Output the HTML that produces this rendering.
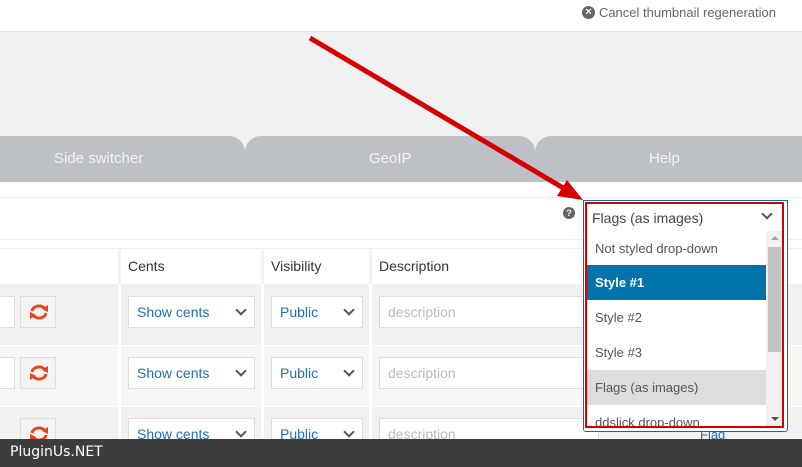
<!DOCTYPE html>
<html><head><style>
body{margin:0;width:802px;height:467px;overflow:hidden;position:relative;font-family:"Liberation Sans",sans-serif;background:#fff}
.a{position:absolute}
.sel{position:absolute;background:#fff;border:1px solid #ddd;color:#2271b1;font-size:14px;box-sizing:border-box;padding-left:8px;line-height:30px}
.chev{position:absolute;right:9px;top:9px;width:6px;height:6px;border-right:2px solid #555;border-bottom:2px solid #555;transform:rotate(45deg)}
.ref{position:absolute;width:36px;height:32px;border:1px solid #ddd;background:#f3f3f3;box-sizing:border-box}
.ref svg{position:absolute;left:8px;top:6px}
.desc{position:absolute;background:#fff;border:1px solid #ddd;color:#bbb;font-size:14px;padding-left:8px;line-height:30px;box-sizing:border-box;width:220px;height:32px}
.opt{position:absolute;left:0;width:179px;height:35px;line-height:35px;padding-left:8px;font-size:13px;color:#555;box-sizing:border-box}
</style></head><body>
<div class="a" style="left:0;top:0;width:802px;height:31px;background:#fff;border-bottom:1px solid #ddd"></div>
<div class="a" style="right:26px;top:5px;font-size:13px;color:#666;display:flex;align-items:center;gap:4px">
<span style="display:inline-block;width:13px;height:13px;border-radius:50%;background:#666;color:#fff;font-size:11px;line-height:13px;text-align:center;font-weight:bold">×</span><span>Cancel thumbnail regeneration</span></div>
<div class="a" style="left:0;top:32px;width:802px;height:150px;background:#f1f1f1"></div>
<div class="a" style="left:-20px;top:136px;width:265px;height:46px;background:#bdc1c6;border-radius:0 16px 0 0"></div>
<div class="a" style="left:245px;top:136px;width:290px;height:46px;background:#bdc1c6;border-radius:16px 16px 0 0"></div>
<div class="a" style="left:535px;top:136px;width:290px;height:46px;background:#bdc1c6;border-radius:16px 0 0 0"></div>
<div class="a" style="left:54px;top:150px;color:#f4f4f4;font-size:15px">Side switcher</div>
<div class="a" style="left:369px;top:150px;color:#f4f4f4;font-size:15px">GeoIP</div>
<div class="a" style="left:649px;top:150px;color:#f4f4f4;font-size:15px">Help</div>
<div class="a" style="left:0;top:197px;width:802px;height:1px;background:#eee"></div>
<div class="a" style="left:0;top:239px;width:802px;height:1px;background:#eee"></div>
<div class="a" style="left:563px;top:207px;width:12px;height:12px;border-radius:50%;background:#666;color:#fff;font-size:9px;font-weight:bold;text-align:center;line-height:12px">?</div>
<!-- table -->
<div class="a" style="left:0;top:248px;width:802px;height:36px;background:#fff;border-top:1px solid #eee"></div>
<div class="a" style="left:118px;top:248px;width:3px;height:200px;background:#f3f3f3"></div>
<div class="a" style="left:261px;top:248px;width:3px;height:200px;background:#f3f3f3"></div>
<div class="a" style="left:369px;top:248px;width:3px;height:200px;background:#f3f3f3"></div>
<div class="a" style="left:128px;top:258px;font-size:14px;color:#333">Cents</div>
<div class="a" style="left:271px;top:258px;font-size:14px;color:#333">Visibility</div>
<div class="a" style="left:379px;top:258px;font-size:14px;color:#333">Description</div>
<div class="a" style="left:0;top:284px;width:802px;height:61px;background:#f1f1f1"></div>
<div class="a" style="left:0;top:346px;width:802px;height:60px;background:#f7f7f5"></div>
<div class="a" style="left:0;top:407px;width:802px;height:40px;background:#f1f1f1"></div>
<div class="a" style="left:118px;top:284px;width:3px;height:170px;background:#fff"></div>
<div class="a" style="left:261px;top:284px;width:3px;height:170px;background:#fff"></div>
<div class="a" style="left:369px;top:284px;width:3px;height:170px;background:#fff"></div>
<div class="a" style="left:0;top:345px;width:802px;height:1px;background:#fff"></div>
<div class="a" style="left:0;top:406px;width:802px;height:1px;background:#fff"></div>

<div class="a" style="left:0;top:296px;width:15px;height:32px;background:#fff;border:1px solid #ddd;border-left:0;box-sizing:border-box"></div>
<div class="ref" style="left:20px;top:296px"><svg width="20" height="18" viewBox="0 0 20 18"><path d="M3 8a7 6 0 0 1 13-2" fill="none" stroke="#e8431c" stroke-width="3"/><path d="M17 10a7 6 0 0 1-13 2" fill="none" stroke="#e8431c" stroke-width="3"/><polygon points="13,6 19,2 19,9" fill="#e8431c"/><polygon points="7,12 1,16 1,9" fill="#e8431c"/></svg></div>
<div class="sel" style="left:128px;top:296px;width:127px;height:32px">Show cents<i class="chev"></i></div>
<div class="sel" style="left:271px;top:296px;width:92px;height:32px">Public<i class="chev"></i></div>
<div class="desc" style="left:379px;top:296px">description</div>

<div class="a" style="left:0;top:357px;width:15px;height:32px;background:#fff;border:1px solid #ddd;border-left:0;box-sizing:border-box"></div>
<div class="ref" style="left:20px;top:357px"><svg width="20" height="18" viewBox="0 0 20 18"><path d="M3 8a7 6 0 0 1 13-2" fill="none" stroke="#e8431c" stroke-width="3"/><path d="M17 10a7 6 0 0 1-13 2" fill="none" stroke="#e8431c" stroke-width="3"/><polygon points="13,6 19,2 19,9" fill="#e8431c"/><polygon points="7,12 1,16 1,9" fill="#e8431c"/></svg></div>
<div class="sel" style="left:128px;top:357px;width:127px;height:32px">Show cents<i class="chev"></i></div>
<div class="sel" style="left:271px;top:357px;width:92px;height:32px">Public<i class="chev"></i></div>
<div class="desc" style="left:379px;top:357px">description</div>

<div class="ref" style="left:20px;top:418px"><svg width="20" height="18" viewBox="0 0 20 18"><path d="M3 8a7 6 0 0 1 13-2" fill="none" stroke="#e8431c" stroke-width="3"/><path d="M17 10a7 6 0 0 1-13 2" fill="none" stroke="#e8431c" stroke-width="3"/><polygon points="13,6 19,2 19,9" fill="#e8431c"/><polygon points="7,12 1,16 1,9" fill="#e8431c"/></svg></div>
<div class="sel" style="left:128px;top:418px;width:127px;height:32px">Show cents<i class="chev"></i></div>
<div class="sel" style="left:271px;top:418px;width:92px;height:32px">Public<i class="chev"></i></div>
<div class="desc" style="left:379px;top:418px">description</div>
<div class="a" style="left:700px;top:427px;color:#2271b1;font-size:13px">Flag</div>

<!-- dropdown -->
<div class="a" style="left:583px;top:200px;width:203px;height:230px;background:#fff;border:1px solid #0073aa;border-radius:0 0 3px 3px"></div>
<div class="a" style="left:585px;top:202px;width:199px;height:226px;box-sizing:border-box;border:2px solid #d40000;overflow:hidden">
<div class="a" style="left:5px;top:6px;font-size:14px;color:#444">Flags (as images)</div>
<div class="chev" style="top:6px;right:11px"></div>
<div class="opt" style="top:27px">Not styled drop-down</div>
<div class="opt" style="top:61px;background:#0073aa;color:#fff;font-weight:bold">Style #1</div>
<div class="opt" style="top:96px">Style #2</div>
<div class="opt" style="top:131px">Style #3</div>
<div class="opt" style="top:166px;background:#ddd">Flags (as images)</div>
<div class="opt" style="top:201px">ddslick drop-down</div>
<div class="a" style="left:179px;top:27px;width:16px;height:199px;background:#f1f1f1"></div>
<div class="a" style="left:181px;top:43px;width:13px;height:105px;background:#c1c1c1"></div>
<div class="a" style="left:184px;top:32px;border:4px solid transparent;border-bottom:4px solid #a3a3a3;border-top:0"></div>
<div class="a" style="left:184px;top:213px;border:4px solid transparent;border-top:4px solid #505050;border-bottom:0"></div>
</div>
<!-- arrow -->
<svg class="a" style="left:0;top:0" width="802" height="467">
<line x1="310" y1="38" x2="570" y2="192" stroke="#d40000" stroke-width="5"/>
<polygon points="583,200 557,196 567,180" fill="#d40000"/>
</svg>
<div class="a" style="left:0;top:439px;width:802px;height:28px;background:#3d3d3d"></div>
<div class="a" style="left:10px;top:444px;color:#fff;font-size:14px;font-family:'DejaVu Sans',sans-serif">PluginUs.NET</div>
</body></html>
